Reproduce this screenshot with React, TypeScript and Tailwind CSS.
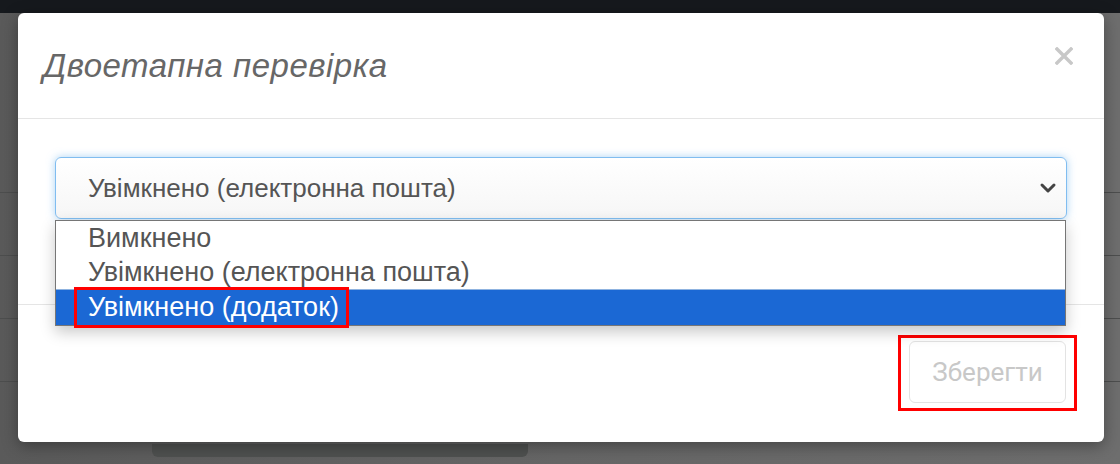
import { ChevronDown } from 'lucide-react'

const options = ['Вимкнено', 'Увімкнено (електронна пошта)', 'Увімкнено (додаток)']

function PageBehind() {
  // dimmed table rows of the page under the modal
  return (
    <div className="flex flex-col">
      <div className="h-[13px] bg-[#16191d]" />
      <div className="h-[179px]" />
      {[0, 1, 2, 3].map((i) => (
        <div key={i} className="h-[63px] border-t border-[#4d4e4e]" />
      ))}
      <div className="ml-[152px] h-[13px] w-[376px] rounded-b-md bg-[#4f5150]" />
    </div>
  )
}

export default function App() {
  return (
    <div className="relative h-[464px] w-[1120px] overflow-hidden bg-gradient-to-r from-[#5a5a5a] via-[#666666] to-[#6e6e6e] font-['Liberation_Sans',Arial,sans-serif]">
      <PageBehind />

      <div className="absolute left-[18px] top-[13px] flex h-[429px] w-[1086px] flex-col rounded-md bg-white shadow-[0_4px_16px_rgba(0,0,0,0.35)]">
        <div className="flex h-[106px] items-center justify-between border-b border-[#e5e5e5] pl-[25px] pr-[31px]">
          <h4 className="text-[33px] italic tracking-[0.5px] text-[#676767]">Двоетапна перевірка</h4>
          <svg viewBox="0 0 18 18" className="-mt-[20px] h-[18px] w-[18px] text-[#c8c8c8]">
            <path d="M2 2 L16 16 M16 2 L2 16" stroke="currentColor" strokeWidth="3.4" strokeLinecap="square" />
          </svg>
        </div>

        <div className="relative h-[186px] border-b border-[#e5e5e5] px-[37px] pt-[38px]">
          <div className="flex h-[62px] items-center justify-between rounded-md border border-[#80bdf0] bg-gradient-to-b from-white to-[#f6f6f6] pl-[32px] pr-[6px] shadow-[0_0_8px_rgba(102,175,233,0.55)]">
            <span className="text-[26px] text-[#555555]">Увімкнено (електронна пошта)</span>
            <ChevronDown className="h-[24px] w-[24px] text-[#444444]" strokeWidth={3} />
          </div>

          <ul className="absolute left-[37px] right-[38px] top-[101px] z-10 border border-[#767676] bg-white shadow-[0_6px_14px_rgba(0,0,0,0.22)]">
            {options.map((o, i) => (
              <li
                key={o}
                className={
                  i === 2
                    ? 'flex h-[36px] items-center border-t border-[#8fb3e0] bg-[#1b68d4] pl-[32px] text-[27px] leading-none text-white'
                    : 'flex h-[34px] items-center pl-[32px] text-[27px] leading-none text-[#555555]'
                }
              >
                {o}
              </li>
            ))}
          </ul>
          <div className="absolute left-[56px] top-[168px] z-20 h-[41px] w-[275px] border-[3px] border-[#ff0000]" />
        </div>

        <div className="flex flex-1 items-start justify-end pr-[38px] pt-[36px]">
          <div className="relative">
            <button className="h-[62px] w-[157px] rounded-md border border-[#e3e3e3] bg-white font-['Roboto',sans-serif] text-[26px] text-[#c8c8c8]">
              Зберегти
            </button>
            <div className="absolute -left-[11px] -top-[6px] h-[76px] w-[179px] border-[3px] border-[#ff0000]" />
          </div>
        </div>
      </div>
    </div>
  )
}
